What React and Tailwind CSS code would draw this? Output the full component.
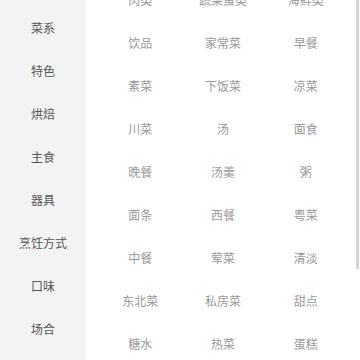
const categories = ['菜系', '特色', '烘焙', '主食', '器具', '烹饪方式', '口味', '场合'];

const items = [
  '肉类', '蔬菜蛋类', '海鲜类',
  '饮品', '家常菜', '早餐',
  '素菜', '下饭菜', '凉菜',
  '川菜', '汤', '面食',
  '晚餐', '汤羹', '粥',
  '面条', '西餐', '粤菜',
  '中餐', '荤菜', '清淡',
  '东北菜', '私房菜', '甜点',
  '糖水', '热菜', '蛋糕',
];

export default function App() {
  return (
    <div
      className="relative flex w-[360px] h-[360px] overflow-hidden bg-white"
      style={{ fontFamily: '"Noto Sans CJK SC", "Noto Sans", sans-serif' }}
    >
      {/* Sidebar */}
      <div className="w-[86px] shrink-0 bg-[#f3f3f3] pt-[6px] flex flex-col">
        {categories.map((c) => (
          <div key={c} className="h-[43px] flex items-center justify-center text-[12px] text-[#555]">
            {c}
          </div>
        ))}
      </div>

      {/* Grid */}
      <div className="flex-1 px-[13px]">
        <div className="grid grid-cols-3 -mt-[22px]">
          {items.map((it, i) => (
            <div key={i} className="h-[43px] flex items-center justify-center text-[12px] text-[#999]">
              {it}
            </div>
          ))}
        </div>
      </div>

      {/* scroll indicator */}
      <div className="absolute right-[1px] top-0 w-[3px] h-[269px] bg-[#d4d4d4]" />
    </div>
  );
}
